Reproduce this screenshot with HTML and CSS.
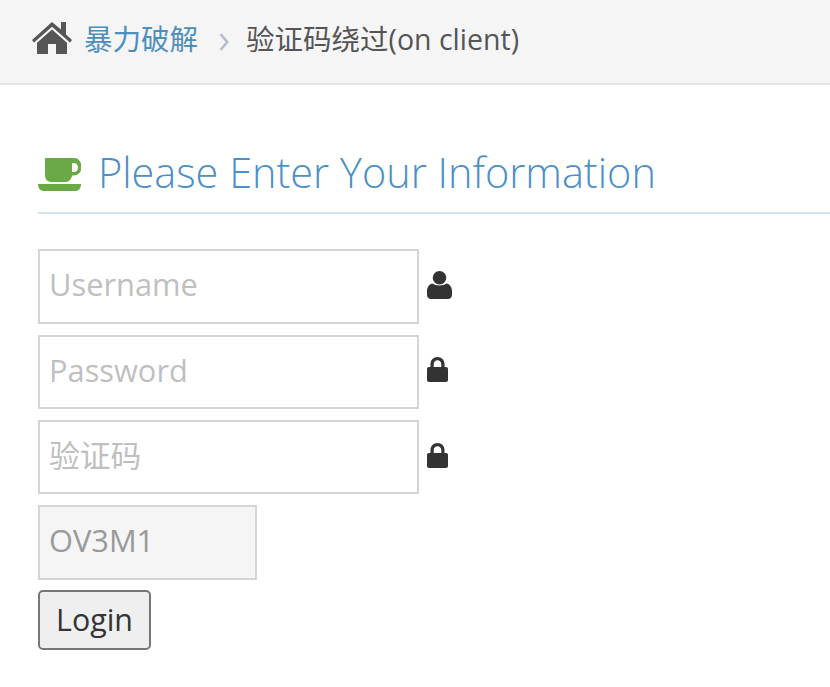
FILE: index.html
```html
<!DOCTYPE html>
<html lang="zh-CN">
<head>
    <meta charset="UTF-8">
    <title>验证码绕过(on client)</title>
    <link rel="stylesheet" href="styles.css">
</head>
<body>
    <div class="breadcrumbs">
        <svg class="home-icon" viewBox="0 0 40 32" width="40" height="32" aria-hidden="true">
            <path d="M20 0 L29 7.500 V0 H34 V12.500 L40 18 L38 20.500 L20 4.800 L2 20.500 L0 18 Z"/>
            <path d="M20 7.600 L35 20.800 V32 H24 V22 H16 V32 H5 V20.800 Z"/>
        </svg>
        <a class="crumb-link" href="#">暴力破解</a>
        <svg class="crumb-sep" viewBox="0 0 10 18" width="10" height="18" aria-hidden="true">
            <path d="M1.500 1 L8.200 9 L1.500 17" fill="none" stroke="#b4bccb" stroke-width="2.600"/>
        </svg>
        <span class="crumb-current">验证码绕过(on client)</span>
    </div>

    <div class="content">
        <h4 class="form-title">
            <svg class="cup-icon" viewBox="0 0 43 34" width="43" height="34" aria-hidden="true">
                <path fill-rule="evenodd" d="M7 0 H36 C40.500 0 43.500 3.500 43.500 9 C43.500 14 40.500 17.500 36 17.500 H34 C33.500 21.500 31 24 27 24 H14 C9.500 24 7 21.500 7 17 Z M34 5 V14 H35.500 C38.500 14 40 12 40 9.500 C40 7 38.500 5 36 5 Z"/>
                <path d="M0 26 H43 C43 30.500 40.500 33 37 33 H6 C2.500 33 0 30.500 0 26 Z"/>
            </svg>
            Please Enter Your Information
        </h4>

        <form class="login-form" onsubmit="return false">
            <div class="field">
                <input class="text-input" type="text" placeholder="Username">
                <svg class="field-icon" viewBox="0 0 25 28" width="25" height="28" aria-hidden="true">
                    <circle cx="12.500" cy="6.800" r="6.800"/>
                    <path d="M5.500 12.500 C8 15 17 15 19.500 12.500 C22.500 13 25 16 25 20 V24 C25 26.500 23 28 21 28 H4 C2 28 0 26.500 0 24 V20 C0 16 2.500 13 5.500 12.500 Z"/>
                </svg>
            </div>
            <div class="field">
                <input class="text-input" type="password" placeholder="Password">
                <svg class="field-icon lock" viewBox="0 0 21 25" width="21" height="25" aria-hidden="true">
                    <path fill-rule="evenodd" d="M3.500 10 V7 C3.500 3 6.500 0 10.500 0 C14.500 0 17.500 3 17.500 7 V10 H19 C20.200 10 21 10.800 21 12 V23 C21 24.200 20.200 25 19 25 H2 C0.800 25 0 24.200 0 23 V12 C0 10.800 0.800 10 2 10 Z M6.700 10 H14.300 V7.200 C14.300 5 12.700 3.300 10.500 3.300 C8.300 3.300 6.700 5 6.700 7.200 Z"/>
                </svg>
            </div>
            <div class="field">
                <input class="text-input" type="text" placeholder="验证码">
                <svg class="field-icon lock" viewBox="0 0 21 25" width="21" height="25" aria-hidden="true">
                    <path fill-rule="evenodd" d="M3.500 10 V7 C3.500 3 6.500 0 10.500 0 C14.500 0 17.500 3 17.500 7 V10 H19 C20.200 10 21 10.800 21 12 V23 C21 24.200 20.200 25 19 25 H2 C0.800 25 0 24.200 0 23 V12 C0 10.800 0.800 10 2 10 Z M6.700 10 H14.300 V7.200 C14.300 5 12.700 3.300 10.500 3.300 C8.300 3.300 6.700 5 6.700 7.200 Z"/>
                </svg>
            </div>
            <div class="field code-field">
                <input class="text-input code-input" type="text" value="OV3M1" readonly>
            </div>
            <button class="login-btn" type="submit">Login</button>
        </form>
    </div>
</body>
</html>
```

FILE: styles.css
```css
body {
    margin: 0;
    background-color: #fff;
    color: #393939;
    font-family: "Open Sans", "Noto Sans CJK SC", sans-serif;
    overflow: hidden;
}

.breadcrumbs {
    display: flex;
    align-items: center;
    height: 75px;
    padding: 0 0 8px 32px;
    background-color: #f5f5f5;
    border-bottom: 2px solid #e5e5e5;
    font-size: 28.500px;
}
.home-icon {
    fill: #555;
    margin-top: 1px;
}
.crumb-link {
    margin-left: 12px;
    color: #4c8fbd;
    text-decoration: none;
}
.crumb-sep {
    margin: 9px 17px 0 21px;
}
.crumb-current {
    color: #555;
}

.content {
    padding-left: 38px;
}
.form-title {
    display: flex;
    align-items: center;
    gap: 17px;
    height: 129px;
    margin: 0;
    padding-top: 47px;
    border-bottom: 2px solid #d5e3ef;
    box-sizing: border-box;
    color: #4c8fcb;
    font-size: 41.450px;
    font-weight: 300;
}
.cup-icon {
    fill: #69aa46;
    margin-top: 5px;
}

.login-form {
    padding-top: 35.300px;
}
.field {
    display: flex;
    align-items: center;
    gap: 8px;
    margin-bottom: 10.950px;
}
.code-field {
    margin-bottom: 10.250px;
}
.field-icon {
    fill: #333;
    margin-top: -2px;
}
.field-icon.lock {
    margin-top: -4px;
}
.text-input {
    width: 381px;
    height: 74.400px;
    padding: 0 9px 4px;
    box-sizing: border-box;
    border: 2px solid #d5d5d5;
    border-radius: 0;
    outline: none;
    background-color: #fff;
    color: #858585;
    font-family: "Open Sans", "Noto Sans CJK SC", sans-serif;
    font-size: 30.800px;
}
.text-input::placeholder {
    color: #bfbfbf;
    opacity: 1;
}
.code-input {
    width: 219px;
    background-color: #f5f5f5;
    color: #999;
}
.login-btn {
    display: block;
    width: 113px;
    height: 60px;
    padding: 0;
    border: 2px solid #767676;
    border-radius: 5px;
    background-color: #efefef;
    color: #333;
    font-family: "Open Sans", sans-serif;
    font-size: 30.400px;
}
```
